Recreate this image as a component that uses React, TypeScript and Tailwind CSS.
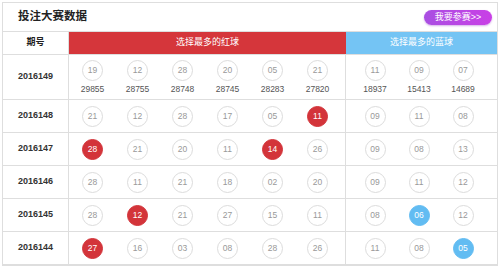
import React from 'react';

type Ball = { n: string; hit?: boolean };
type Row = { issue: string; red: Ball[]; blue: Ball[]; redCount?: string[]; blueCount?: string[] };

const b = (list: string): Ball[] =>
  list.split(' ').map((s) => (s.startsWith('*') ? { n: s.slice(1), hit: true } : { n: s }));

const rows: Row[] = [
  {
    issue: '2016149',
    red: b('19 12 28 20 05 21'),
    blue: b('11 09 07'),
    redCount: ['29855', '28755', '28748', '28745', '28283', '27820'],
    blueCount: ['18937', '15413', '14689'],
  },
  { issue: '2016148', red: b('21 12 28 17 05 *11'), blue: b('09 11 08') },
  { issue: '2016147', red: b('*28 21 20 11 *14 26'), blue: b('09 08 13') },
  { issue: '2016146', red: b('28 11 21 18 02 20'), blue: b('09 11 12') },
  { issue: '2016145', red: b('28 *12 21 27 15 11'), blue: b('08 *06 12') },
  { issue: '2016144', red: b('*27 16 03 08 28 26'), blue: b('11 08 *05') },
];

const BallCell: React.FC<{ ball: Ball; color: 'red' | 'blue'; count?: string; wide?: boolean }> = ({
  ball,
  color,
  count,
  wide,
}) => {
  const filled = ball.hit
    ? color === 'red'
      ? 'bg-[#d3343a] border-[#d3343a] text-white'
      : 'bg-[#62bcf2] border-[#62bcf2] text-white'
    : 'bg-white border-[#dcdcdc] text-[#999]';
  return (
    <div className={`${wide ? 'w-[45px]' : 'w-[44px]'} flex flex-col items-center ${count ? 'pt-[5px]' : ''}`}>
      <div className={`w-[21px] h-[21px] rounded-full border flex items-center justify-center text-[8.5px] ${filled}`}>
        {ball.n}
      </div>
      {count && <div className="mt-[3px] text-[8.5px] leading-[10px] text-[#555]">{count}</div>}
    </div>
  );
};

const App: React.FC = () => {
  return (
    <div className="w-[500px] h-[267px] bg-white overflow-hidden" style={{ fontFamily: '"Liberation Sans", "Noto Sans CJK SC", sans-serif' }}>
      <div className="ml-[2px] mt-[2px] w-[496px] border border-[#dedede]">
        <div className="h-[29px] border-b border-[#dedede] flex items-center justify-between pl-[15px] pr-[5px]">
          <h1 className="text-[11.5px] font-bold text-[#222]">投注大赛数据</h1>
          <button className="h-[15px] w-[68px] rounded-full bg-gradient-to-r from-[#a94ee2] to-[#c93fe6] text-white text-[9px] leading-[15px] shadow-[0_1px_2px_rgba(150,60,200,0.4)]">
            我要参赛&gt;&gt;
          </button>
        </div>

        <div className="flex h-[23px] border-b border-[#dedede]">
          <div className="w-[66px] border-r border-[#dedede] flex items-center justify-center text-[9px] font-bold text-[#222]">
            期号
          </div>
          <div className="w-[277px] bg-[#d5363b] flex items-center justify-center text-[9px] text-white">
            选择最多的红球
          </div>
          <div className="flex-1 bg-[#74c4f4] flex items-center justify-center text-[9px] text-white">
            选择最多的蓝球
          </div>
        </div>

        {rows.map((row, i) => (
          <div
            key={row.issue}
            className={`flex border-b border-[#dedede] ${i === 0 ? 'h-[45px]' : 'h-[33px]'}`}
          >
            <div className="w-[66px] border-r border-[#dedede] flex items-center justify-center text-[9px] font-bold text-[#333]">
              {row.issue}
            </div>
            <div className={`w-[277px] border-r border-[#dedede] flex pl-[1px] ${i === 0 ? 'items-start' : 'items-center'}`}>
              {row.red.map((ball, j) => (
                <BallCell key={j} ball={ball} color="red" count={row.redCount?.[j]} wide />
              ))}
            </div>
            <div className={`flex-1 flex pl-[7px] ${i === 0 ? 'items-start' : 'items-center'}`}>
              {row.blue.map((ball, j) => (
                <BallCell key={j} ball={ball} color="blue" count={row.blueCount?.[j]} />
              ))}
            </div>
          </div>
        ))}
      </div>
    </div>
  );
};

export default App;
